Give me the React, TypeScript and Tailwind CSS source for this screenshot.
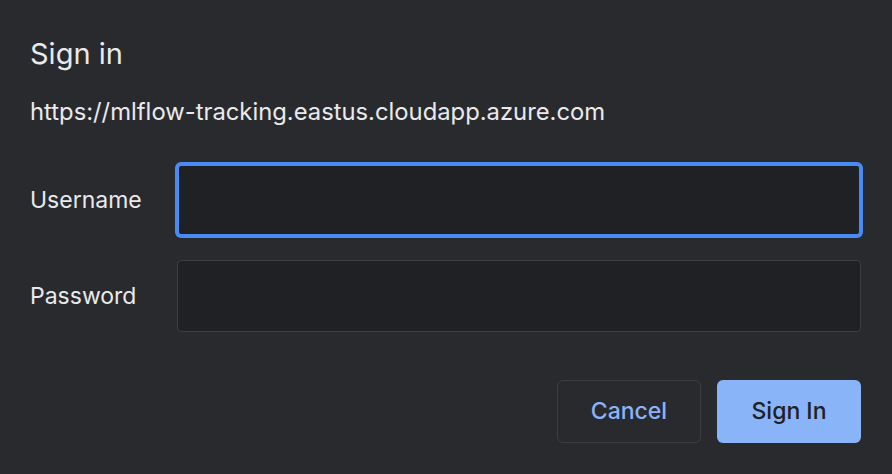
export default function App() {
  return (
    <div
      className="h-[474px] w-[892px] bg-[#292a2d] text-[#e8eaed] pl-[30px] pr-[31px] pt-[37px]"
      style={{ fontFamily: "Inter, 'Noto Sans', sans-serif" }}
    >
      <h1 className="text-[29px] leading-[34px] font-normal">Sign in</h1>
      <p className="mt-[29px] text-[23.8px] leading-[24px]">
        https://mlflow-tracking.eastus.cloudapp.azure.com
      </p>

      <div className="mt-[40px] flex flex-col gap-6">
        <div className="flex items-center">
          <label className="w-[147px] shrink-0 text-[23px] leading-[24px]">Username</label>
          <div className="h-[72px] flex-1 rounded-[4px] border-2 border-[#4a8af4] bg-[#202124] ring-2 ring-[#4a8af4]" />
        </div>
        <div className="flex items-center">
          <label className="w-[147px] shrink-0 text-[23px] leading-[24px]">Password</label>
          <div className="h-[72px] flex-1 rounded-[4px] border border-[#3c3d41] bg-[#202124]" />
        </div>
      </div>

      <div className="mt-12 flex justify-end gap-4">
        <button className="h-[63px] w-[144px] rounded-[6px] border border-[#3c3d41] text-[23px] font-medium text-[#8ab4f8]">
          Cancel
        </button>
        <button className="h-[63px] w-[144px] rounded-[6px] bg-[#8ab4f8] text-[23px] font-medium text-[#202124]">
          Sign In
        </button>
      </div>
    </div>
  )
}
